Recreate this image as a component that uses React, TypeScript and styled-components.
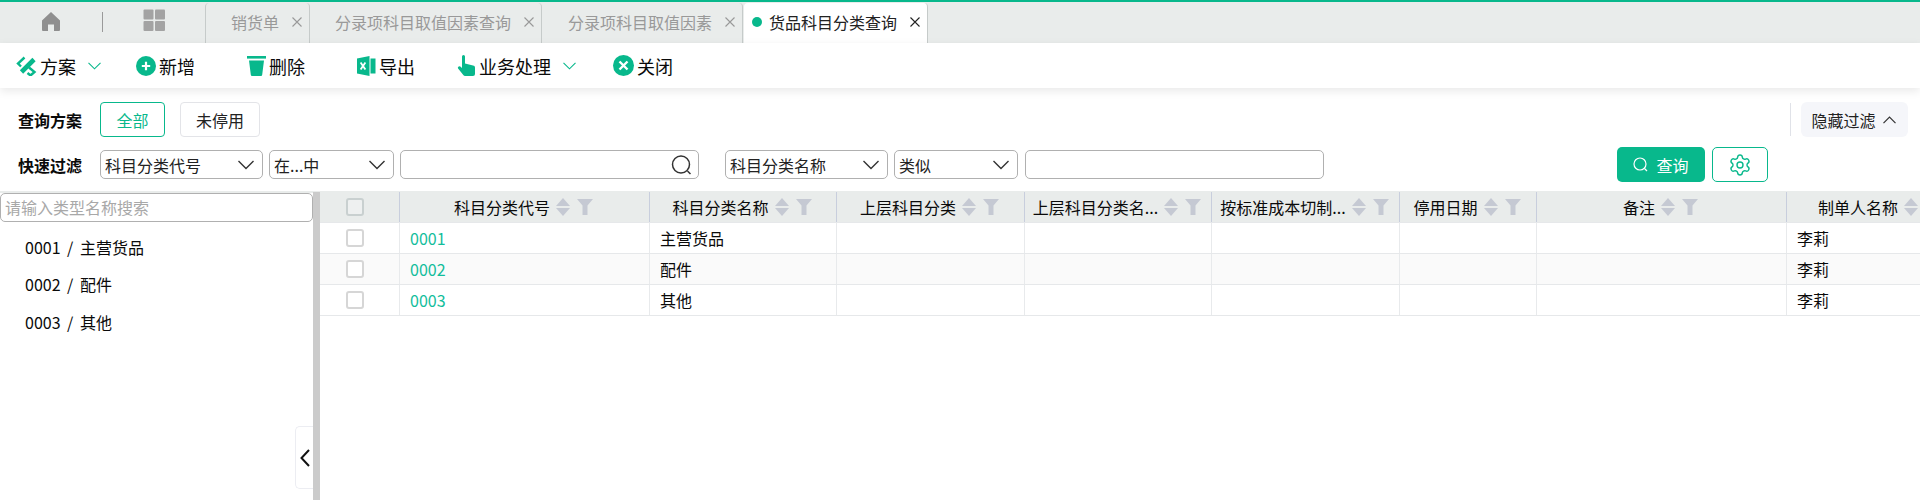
import React from 'react';
import styled, { createGlobalStyle } from 'styled-components';
import { Settings } from 'lucide-react';

const GREEN = '#08b88c';
const ICON_GREY = '#c5c9d3';

const GlobalStyle = createGlobalStyle`
    html, body {
        margin: 0;
        padding: 0;
        background: #fff;
        height: 500px;
        overflow: hidden;
    }
    * {
        box-sizing: border-box;
    }
`;

const Page = styled.div`
    display: flex;
    flex-direction: column;
    width: 1920px;
    height: 500px;
    overflow: hidden;
    font-family: 'Noto Sans CJK SC', 'Noto Sans', sans-serif;
    font-size: 16px;
    color: #0a0a0a;
`;

const TabBar = styled.div`
    display: flex;
    flex: none;
    height: 43px;
    padding-top: 1px;
    border-top: 2px solid ${GREEN};
    background: #e9eceb;
`;

const NavSlot = styled.div<{ $lift: number }>`
    display: flex;
    width: 102px;
    padding-bottom: ${props => props.$lift}px;
    align-items: center;
    justify-content: center;
`;

const NavDivider = styled.div`
    width: 1px;
    height: 20px;
    margin-top: 9px;
    background: #9a9a9a;
`;

const Tab = styled.div<{ $active?: boolean; $first?: boolean }>`
    display: flex;
    margin-right: ${props => (props.$first ? '0' : '1px')};
    padding: ${props => (props.$active ? '0 7px 2px 8px' : '0 7px 2px 25px')};
    align-items: center;
    gap: 13px;
    background: ${props => (props.$active ? '#fff' : 'transparent')};
    color: ${props => (props.$active ? '#222' : '#999')};
    border-right: 1px solid #c6cbca;
    border-left: ${props => (props.$first ? '1px solid #c6cbca' : '0')};
    border-radius: 4px 4px 0 0;
    white-space: nowrap;
`;

const ActiveLabel = styled.span`
    display: flex;
    align-items: center;
    gap: 7px;
`;

const Dot = styled.span`
    width: 10px;
    height: 10px;
    border-radius: 50%;
    background: ${GREEN};
`;

const Toolbar = styled.div`
    position: relative;
    display: flex;
    flex: none;
    height: 45px;
    padding-left: 16px;
    align-items: center;
    background: #fff;
    box-shadow: 0 3px 9px rgba(0, 0, 0, 0.09);
    font-size: 18px;
`;

const Tool = styled.div<{ $width: number }>`
    display: flex;
    width: ${props => props.$width}px;
    align-items: center;
    gap: 3px;
    white-space: nowrap;
`;

const CaretSlot = styled.span`
    display: flex;
    margin-left: 9px;
`;

const Filters = styled.div`
    display: flex;
    flex: none;
    flex-direction: column;
    gap: 10px;
    padding: 14px 12px 9px 18px;
`;

const FilterRow = styled.div`
    display: flex;
    height: 35px;
    align-items: center;
`;

const FilterLabel = styled.div`
    width: 82px;
    font-weight: 700;
`;

const PlanButton = styled.div<{ $selected?: boolean }>`
    display: flex;
    width: ${props => (props.$selected ? '65px' : '80px')};
    height: 35px;
    margin-right: 15px;
    align-items: center;
    justify-content: center;
    border: 1px solid ${props => (props.$selected ? GREEN : '#e3e4e8')};
    border-radius: 4px;
    color: ${props => (props.$selected ? GREEN : '#222')};
`;

const Field = styled.div<{ $width: number; $gapLeft?: number }>`
    display: flex;
    width: ${props => props.$width}px;
    height: 29px;
    margin-left: ${props => props.$gapLeft ?? 6}px;
    padding: 0 8px 0 4px;
    align-items: center;
    justify-content: space-between;
    border: 1px solid #b0b0b0;
    border-radius: 5px;
    background: #fff;
    color: #222;
`;

const HideFilter = styled.div`
    display: flex;
    width: 107px;
    height: 35px;
    padding-right: 2px;
    align-items: center;
    justify-content: center;
    gap: 7px;
    border-radius: 6px;
    background: #f5f6fa;
    color: #222;
`;

const HideDivider = styled.div`
    width: 1px;
    height: 33px;
    margin: 0 10px 0 auto;
    background: #e0e2e8;
`;

const Actions = styled.div`
    display: flex;
    gap: 7px;
    margin: 0 140px 0 auto;
`;

const QueryButton = styled.div`
    display: flex;
    width: 88px;
    height: 35px;
    align-items: center;
    justify-content: center;
    gap: 8px;
    border-radius: 5px;
    background: ${GREEN};
    color: #fff;
`;

const SettingsButton = styled.div`
    display: flex;
    width: 56px;
    height: 35px;
    align-items: center;
    justify-content: center;
    border: 1px solid ${GREEN};
    border-radius: 5px;
    color: ${GREEN};
`;

const Main = styled.div`
    position: relative;
    display: flex;
    flex: 1;
    min-height: 0;
    border-top: 1px solid #e9eceb;
`;

const Side = styled.div`
    flex: none;
    width: 313px;
    border-top: 1px solid #e9eceb;
`;

const SideSearch = styled.div`
    display: flex;
    height: 29px;
    padding: 0 0 2px 4px;
    align-items: center;
    border: 1px solid #b0b0b0;
    border-radius: 5px;
    color: #a8a8a8;
`;

const SideList = styled.div`
    display: flex;
    flex-direction: column;
    padding: 6px 0 0 25px;
`;

const SideItem = styled.div`
    display: flex;
    height: 37.5px;
    align-items: center;
    white-space: pre;
    word-spacing: 3px;
`;

const Splitter = styled.div`
    flex: none;
    width: 7px;
    background: #cbcbcb;
`;

const Collapse = styled.div`
    position: absolute;
    top: 234px;
    left: 295px;
    display: flex;
    width: 18px;
    height: 63px;
    align-items: center;
    justify-content: center;
    border: 1px solid #ecedf2;
    border-right: 0;
    border-radius: 5px 0 0 5px;
    background: #fff;
`;

const Table = styled.div`
    flex: 1;
    min-width: 0;
    overflow: hidden;
`;

const Row = styled.div<{ $head?: boolean; $striped?: boolean }>`
    display: grid;
    grid-template-columns: 80px 250px 187px 188px 187px 188px 137px 250px 187px;
    width: 1654px;
    height: 31px;
    background: ${props => (props.$head ? '#e9eceb' : props.$striped ? '#fafafa' : '#fff')};
    border-bottom: 1px solid #e6e8ea;
`;

const Cell = styled.div<{ $head?: boolean }>`
    display: flex;
    min-width: 0;
    padding: ${props => (props.$head ? '0 2px 0 0' : '0 10px')};
    align-items: center;
    justify-content: ${props => (props.$head ? 'center' : 'flex-start')};
    gap: 6px;
    border-right: 1px solid ${props => (props.$head ? '#c8cedd' : '#e8eaec')};
    white-space: nowrap;
    &:last-child {
        border-right: 0;
    }
`;

const CheckCell = styled(Cell)`
    padding: 0 10px 0 0;
    justify-content: center;
`;

const CodeLink = styled.span`
    color: #12bd9b;
`;

const Check = styled.span<{ $head?: boolean }>`
    width: 18px;
    height: 18px;
    border: 2px solid ${props => (props.$head ? '#c9d0d0' : '#d6d6d6')};
    border-radius: 3px;
    background: ${props => (props.$head ? '#eef0f0' : '#fff')};
`;

const SortFilter = styled.span`
    display: flex;
    flex: none;
    align-items: center;
    gap: 7px;
`;

const SearchSlot = styled.span`
    display: flex;
    margin-right: -2px;
`;

const Close = () => (
    <svg width="10" height="10" viewBox="0 0 10 10" fill="none" stroke="currentColor" strokeWidth="1.1">
        <path d="M0.5 0.5L9.5 9.5M9.5 0.5L0.5 9.5" />
    </svg>
);

const HomeIcon = () => (
    <svg width="20" height="21" viewBox="0 0 20 21" fill="#8f8f8f">
        <path d="M10 1L19 9.5V19a1 1 0 0 1-1 1h-5v-6.5H7V20H2a1 1 0 0 1-1-1V9.5z" />
    </svg>
);

const GridIcon = () => (
    <svg width="22" height="22" viewBox="0 0 22 22" fill="#a3a3a3">
        <rect x="0.5" y="0.5" width="10" height="10" rx="1" />
        <rect x="12" y="0.5" width="10" height="10" rx="1" />
        <rect x="0.5" y="12" width="10" height="10" rx="1" />
        <rect x="12" y="12" width="10" height="10" rx="1" />
    </svg>
);

const PlanIcon = () => (
    <svg width="21" height="20" viewBox="0 0 21 20" fill="none" stroke={GREEN}>
        <path d="M5.5 16L18 3.5" strokeWidth="4.6" />
        <path d="M8.5 1.5L2 7.5L5 10.5" strokeWidth="2.4" />
        <path d="M13 11.5L18.5 16L14.5 19.5L11.5 17" strokeWidth="2.4" />
    </svg>
);

const PlusIcon = () => (
    <svg width="20" height="20" viewBox="0 0 20 20">
        <circle cx="10" cy="10" r="10" fill={GREEN} />
        <path d="M10 5.8V14.2M5.8 10H14.2" stroke="#fff" strokeWidth="2.2" />
    </svg>
);

const TrashIcon = () => (
    <svg width="19" height="20" viewBox="0 0 19 20" fill={GREEN}>
        <rect x="0" y="0" width="19" height="2.6" />
        <path d="M2 4.5H17L15.2 18.8a1.3 1.3 0 0 1-1.3 1.2H5.1a1.3 1.3 0 0 1-1.3-1.2z" />
    </svg>
);

const ExcelIcon = () => (
    <svg width="19" height="20" viewBox="0 0 19 20">
        <path d="M0 2.5L12.5 0V20L0 17.5z" fill={GREEN} />
        <rect x="13.5" y="2.5" width="5" height="15" fill={GREEN} />
        <path d="M3.6 6.5L8.4 13.5M8.4 6.5L3.6 13.5" stroke="#fff" strokeWidth="1.8" />
    </svg>
);

const HandIcon = () => (
    <svg width="19" height="21" viewBox="0 0 18 21" fill={GREEN}>
        <path d="M4.5 1.5a1.5 1.5 0 0 1 3 0V8.5L15.5 10.5A2 2 0 0 1 17.5 12.5V19a2 2 0 0 1-2 2H7.5a2 2 0 0 1-1.5-.7L0.6 13.6a1.5 1.5 0 0 1 2.2-2L4.5 13z" />
    </svg>
);

const CloseCircleIcon = () => (
    <svg width="21" height="21" viewBox="0 0 21 21">
        <circle cx="10.5" cy="10.5" r="10.5" fill={GREEN} />
        <path d="M6.5 6.5L14.5 14.5M14.5 6.5L6.5 14.5" stroke="#fff" strokeWidth="2.4" />
    </svg>
);

const ToolCaret = () => (
    <CaretSlot>
        <svg width="13" height="8" viewBox="0 0 13 8" fill="none" stroke={GREEN} strokeWidth="1.1">
            <path d="M0.5 0.8L6.5 6.8L12.5 0.8" />
        </svg>
    </CaretSlot>
);

const SelectCaret = () => (
    <svg width="16" height="10" viewBox="0 0 16 10" fill="none" stroke="#333" strokeWidth="1.4">
        <path d="M0.5 1L8 8.5L15.5 1" />
    </svg>
);

const UpCaret = () => (
    <svg width="13" height="8" viewBox="0 0 13 8" fill="none" stroke="#333" strokeWidth="1.2">
        <path d="M0.5 7.2L6.5 1.2L12.5 7.2" />
    </svg>
);

const SearchIcon = () => (
    <SearchSlot>
        <svg width="21" height="20" viewBox="0 0 21 20" fill="none" stroke="#333" strokeWidth="1.5">
            <circle cx="10" cy="9.5" r="8.5" />
            <path d="M16.5 16L19.5 19" />
        </svg>
    </SearchSlot>
);

const QueryIcon = () => (
    <svg width="15" height="15" viewBox="0 0 15 15" fill="none" stroke="#fff" strokeWidth="1.2">
        <circle cx="7" cy="7" r="6" />
        <path d="M11.5 11.5L14 14" />
    </svg>
);

const SortIcons = () => (
    <SortFilter>
        <svg width="14" height="20" viewBox="0 0 14 20" fill={ICON_GREY}>
            <path d="M7 1L14 9H0zM0 11H14L7 19z" />
        </svg>
        <svg width="16" height="16" viewBox="0 0 16 16" fill={ICON_GREY}>
            <path d="M0 0H16L10.5 6.5V16H5.5V6.5z" />
        </svg>
    </SortFilter>
);

const TABS = ['销货单', '分录项科目取值因素查询', '分录项科目取值因素'];

const COLUMNS = [
    '科目分类代号',
    '科目分类名称',
    '上层科目分类',
    '上层科目分类名...',
    '按标准成本切制...',
    '停用日期',
    '备注',
    '制单人名称',
];

const RECORDS = [
    { code: '0001', name: '主营货品' },
    { code: '0002', name: '配件' },
    { code: '0003', name: '其他' },
];

const App = () => (
    <Page>
        <GlobalStyle />
        <TabBar>
            <NavSlot $lift={3}>
                <HomeIcon />
            </NavSlot>
            <NavDivider />
            <NavSlot $lift={6}>
                <GridIcon />
            </NavSlot>
            {TABS.map((tab, index) => (
                <Tab key={tab} $first={index === 0}>
                    {tab}
                    <Close />
                </Tab>
            ))}
            <Tab $active>
                <ActiveLabel>
                    <Dot />
                    货品科目分类查询
                </ActiveLabel>
                <Close />
            </Tab>
        </TabBar>
        <Toolbar>
            <Tool $width={120}>
                <PlanIcon />
                方案
                <ToolCaret />
            </Tool>
            <Tool $width={111}>
                <PlusIcon />
                新增
            </Tool>
            <Tool $width={110}>
                <TrashIcon />
                删除
            </Tool>
            <Tool $width={100}>
                <ExcelIcon />
                导出
            </Tool>
            <Tool $width={156}>
                <HandIcon />
                业务处理
                <ToolCaret />
            </Tool>
            <Tool $width={70}>
                <CloseCircleIcon />
                关闭
            </Tool>
        </Toolbar>
        <Filters>
            <FilterRow>
                <FilterLabel>查询方案</FilterLabel>
                <PlanButton $selected>全部</PlanButton>
                <PlanButton>未停用</PlanButton>
                <HideDivider />
                <HideFilter>
                    隐藏过滤
                    <UpCaret />
                </HideFilter>
            </FilterRow>
            <FilterRow>
                <FilterLabel>快速过滤</FilterLabel>
                <Field $width={163} $gapLeft={0}>
                    科目分类代号
                    <SelectCaret />
                </Field>
                <Field $width={125}>
                    在...中
                    <SelectCaret />
                </Field>
                <Field $width={299}>
                    <span />
                    <SearchIcon />
                </Field>
                <Field $width={163} $gapLeft={26}>
                    科目分类名称
                    <SelectCaret />
                </Field>
                <Field $width={124}>
                    类似
                    <SelectCaret />
                </Field>
                <Field $width={299} $gapLeft={7} />
                <Actions>
                    <QueryButton>
                        <QueryIcon />
                        查询
                    </QueryButton>
                    <SettingsButton>
                        <Settings size={24} strokeWidth={1.4} />
                    </SettingsButton>
                </Actions>
            </FilterRow>
        </Filters>
        <Main>
            <Side>
                <SideSearch>请输入类型名称搜索</SideSearch>
                <SideList>
                    {RECORDS.map(record => (
                        <SideItem key={record.code}>
                            {record.code} / {record.name}
                        </SideItem>
                    ))}
                </SideList>
            </Side>
            <Collapse>
                <svg width="10" height="18" viewBox="0 0 10 18" fill="none" stroke="#111" strokeWidth="2">
                    <path d="M9 1L1.5 9L9 17" />
                </svg>
            </Collapse>
            <Splitter />
            <Table>
                <Row $head>
                    <CheckCell $head>
                        <Check $head />
                    </CheckCell>
                    {COLUMNS.map(column => (
                        <Cell $head key={column}>
                            {column}
                            <SortIcons />
                        </Cell>
                    ))}
                </Row>
                {RECORDS.map((record, index) => (
                    <Row key={record.code} $striped={index === 1}>
                        <CheckCell>
                            <Check />
                        </CheckCell>
                        <Cell>
                            <CodeLink>{record.code}</CodeLink>
                        </Cell>
                        <Cell>{record.name}</Cell>
                        <Cell />
                        <Cell />
                        <Cell />
                        <Cell />
                        <Cell />
                        <Cell>李莉</Cell>
                    </Row>
                ))}
            </Table>
        </Main>
    </Page>
);

export default App;
